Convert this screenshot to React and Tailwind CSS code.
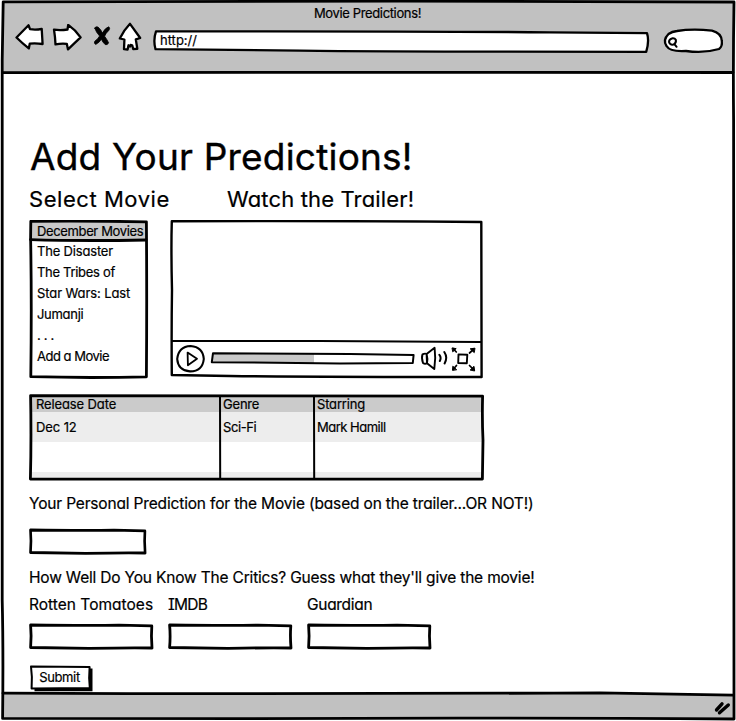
function Outline({ box, children }) {
  return (
    <svg
      viewBox={box}
      preserveAspectRatio="none"
      className="pointer-events-none absolute inset-0 size-full fill-none stroke-black stroke-[2.8]"
      strokeLinejoin="round"
      strokeLinecap="round"
    >
      {children}
    </svg>
  );
}

function ToolIcon({ box, className, children }) {
  return (
    <svg viewBox={box} className={`shrink-0 fill-white stroke-black stroke-[2.3] ${className}`} strokeLinejoin="round" strokeLinecap="round">
      {children}
    </svg>
  );
}

function Toolbar() {
  return (
    <header className="flex h-[73px] shrink-0 flex-col bg-[#c1c1c1] pt-[2px]">
      <div className="pr-px text-center text-[13px] leading-[22px] tracking-[-0.36px]">Movie Predictions!</div>
      <div className="flex items-start pl-[14px]">
        <ToolIcon box="14 24 32 28" className="h-7 w-8">
          <path d="M16.5 37.5 L28.5 25.2 L30 29.2 Q36 30.2 41.7 28.8 L42.6 44 Q36 43 29.8 43.6 L28.8 48.4 Q22 43 16.5 37.5Z" />
        </ToolIcon>
        <ToolIcon box="51 24 32 28" className="ml-[5px] h-7 w-8">
          <path d="M54 29.6 Q60 30.6 67.5 29.5 L68.2 24.9 Q75.5 30 80.6 37.3 Q74.5 43 68 49.4 L66.8 43.8 Q61 43.2 55.5 44.4 Q55.2 37 54 29.6Z" />
        </ToolIcon>
        <ToolIcon box="92 24 20 24" className="ml-[9px] h-6 w-5">
          <path d="M94.8 28.2 Q95.2 26 98 27 Q101.2 29.8 102.4 33 Q105 28 108.8 26.8 Q110.4 28 109 30.2 Q105.6 33.4 104.6 36.2 Q107 39.5 108.6 42.8 Q107.6 45.4 105.2 44.6 Q102.4 42 101.4 39.2 Q99.4 42.6 95.8 44.4 Q93.6 43.6 94.8 41.2 Q98.2 38.8 99.6 36 Q96.2 32.6 94.8 28.2Z" className="fill-black stroke-[0.8]" />
        </ToolIcon>
        <ToolIcon box="116 22 28 30" className="-mt-[2px] ml-1 h-[30px] w-7">
          <path d="M130 23.8 L140.2 38 L135.8 39.4 L137.3 48.8 L133.2 49 L132.2 45.3 L130.6 45 L130 46.5 L128.5 45.3 L127.6 49.5 L124 49.2 L124.4 39.5 L119.8 38.5 Q124 30 130 23.8Z" />
        </ToolIcon>
        <div className="relative mt-1 ml-2 h-7 w-[500px] pl-[8px] text-[13px] leading-[25px]">
          <Outline box="152 28 500 28">
            <path d="M156 31.4 Q400 31 550 32.3 L647 33.2 Q649.5 41 646.2 51.8 Q400 51.8 300 50.6 L155.5 49.2 Q153 40 156 31.4Z" className="fill-white stroke-[2.3]" />
          </Outline>
          <span className="relative">http://</span>
        </div>
        <ToolIcon box="660 26 68 30" className="mt-[2px] ml-2 h-[30px] w-[68px]">
          <path d="M677 31 Q692 28.6 712 30.6 Q721.5 33 721.8 41 Q722.5 46.5 719 49 Q704 53.5 686 51 Q670 52 666.5 46 Q662.5 40 668.5 34 Q672 31.5 677 31Z" />
          <path d="M672.6 38.2 Q669 39 669 42 Q670 45.2 673.5 44.6 Q676.6 43 675.8 39.8 Q674.8 38 672.6 38.2 M675 44.8 L676.6 46.8" className="fill-none stroke-2" />
        </ToolIcon>
      </div>
    </header>
  );
}

const movies = [
  { name: "The Disaster", cls: "tracking-[-0.18px]" },
  { name: "The Tribes of", cls: "tracking-[-0.3px]" },
  { name: "Star Wars: Last", cls: "tracking-[-0.1px]" },
  { name: "Jumanji", cls: "tracking-[-0.3px]" },
  { name: ". . .", cls: "tracking-[-0.3px]" },
  { name: "Add a Movie", cls: "tracking-[-0.5px]" },
];

function MovieList() {
  return (
    <div className="relative h-40 w-[120px] shrink-0 pt-[2px] text-[13px]">
      <div className="mx-[2px] h-[19px] bg-[#c9c9c9] pl-[6px] leading-[18px] tracking-[-0.36px] whitespace-nowrap">December Movies</div>
      <ul className="pl-2">
        {movies.map((m) => (
          <li key={m.name} className={`h-[21px] leading-[21px] whitespace-nowrap ${m.cls}`}>{m.name}</li>
        ))}
      </ul>
      <Outline box="29 220 120 160">
        <path d="M30.8 221.3 Q90 220.8 146.4 221.8 Q147 300 146.4 376.8 Q90 378.2 30.8 376.7 Q31.8 300 30.6 238 Z" />
        <path d="M30.5 239.6 Q80 241.2 146 240" />
      </Outline>
    </div>
  );
}

function Player() {
  return (
    <div className="relative ml-[21px] flex h-40 w-[314px] flex-col justify-end pb-[3px]">
      <div className="flex h-[38px] items-center pl-[6px]">
        <ToolIcon box="176 342 30 30" className="size-[30px]">
          <path d="M190.6 345 Q203 346 203.8 358 Q202.5 370.5 190 370.4 Q178 369.5 177.2 358 Q178.5 345.5 190.6 345Z" className="stroke-[2.1]" />
          <path d="M187.6 351.6 L197 357.8 L187.9 364.2Z" className="stroke-[1.8]" />
        </ToolIcon>
        <div className="relative ml-1 h-[18px] w-[206px] px-[3px] py-1">
          <div className="h-[10px] w-[101px] bg-[#c9c9c9]" />
          <Outline box="210 349 206 18">
            <path d="M213 353.2 L350 354 L413.6 355 L412.8 363 L340 363.4 L211.8 362.2Z" className="stroke-2" />
          </Outline>
        </div>
        <ToolIcon box="419 345 30 28" className="ml-[3px] h-7 w-[30px]">
          <path d="M426.6 355 L434.6 348.8 Q436 359 434.3 370 L427 364.2Z M422.5 355.4 Q425 354 426.6 355 Q428 360 427 364.2 Q425 365.5 423 364 Q421.2 359 422.5 355.4Z" className="stroke-[1.9]" />
          <path d="M439.4 355.8 Q441.6 358.5 439.8 362 M444.3 353 Q448 358.5 444.6 364.4" className="fill-none stroke-2" />
        </ToolIcon>
        <ToolIcon box="450 345 28 28" className="mt-px ml-px size-7">
          <path d="M458.5 354.4 L467.3 354.8 L466.8 363.3 L458.2 363Z" className="stroke-[1.9]" />
          <path d="M456.3 352 L453 348.5 M469.5 353 L474 349 M456.5 365.5 L453 369.5 M469.5 365.5 L474 370" className="stroke-[1.7]" />
          <path d="M452.4 348 L456.2 348.6 L453 351.6Z M474.6 348.2 L470.2 348.8 L474 352.4Z M452.6 370 L452.8 366.2 L456.4 369.5Z M474.6 370.6 L474 366.3 L470.4 369.8Z" className="fill-black stroke-1" />
        </ToolIcon>
      </div>
      <Outline box="170 220 314 160">
        <path d="M171.8 221.3 Q320 220.6 481.3 222 L481.6 377 Q320 377 230 376 L171.8 375 Q171.4 330 172 290 Q171 250 171.8 221.3Z" className="stroke-[2.4]" />
        <path d="M172 341 L320 341 L481 342" className="stroke-[2.2]" />
      </Outline>
    </div>
  );
}

function MovieTable() {
  const grid = "grid grid-cols-[190px_94px_1fr]";
  return (
    <div className="relative mt-[14px] h-[87px] w-[456px] px-[2px] pt-[2px] text-[13px] whitespace-nowrap">
      <div className={`${grid} h-4 bg-[#cbcbcb] leading-[17px]`}>
        <span className="pl-[5px] tracking-[-0.12px]">Release Date</span>
        <span className="pl-[2px] tracking-[-0.2px]">Genre</span>
        <span className="pl-[2px] tracking-[-0.18px]">Starring</span>
      </div>
      <div className={`${grid} h-[30px] bg-[#ededed] leading-[30px]`}>
        <span className="pl-[5px] tracking-[-0.1px]">Dec 12</span>
        <span className="pl-[2px] tracking-[-0.4px]">Sci-Fi</span>
        <span className="pl-[2px] tracking-[-0.5px]">Mark Hamill</span>
      </div>
      <div className="h-[30px]" />
      <div className="h-[7px] bg-[#ededed]" />
      <Outline box="29 394 456 87">
        <path d="M30.6 395.6 Q200 396 482.6 396.2 Q482 420 483 440 L482.4 479 Q250 478.4 150 479.2 L30.4 479 Q31.4 440 30.6 395.6Z" />
        <path d="M220 397 L220.2 478 M314 397 L314.2 478" className="stroke-2" />
      </Outline>
    </div>
  );
}

function ScoreInput({ label, className = "" }) {
  return (
    <div className={`relative h-[27px] ${className}`} role="textbox" aria-label={label}>
      <Outline box="0 0 125 27">
        <path d="M1.6 2 Q60 2.8 90 2.2 L122.8 2.9 Q122 13 123 25 Q100 24.6 60 25.4 Q30 25 1.6 24.5 Q2.6 13 1.6 2Z" />
      </Outline>
    </div>
  );
}

const critics = [
  { name: "Rotten Tomatoes", cls: "tracking-[0.02px]" },
  { name: "IMDB", cls: "tracking-[-0.75px]" },
  { name: "Guardian", cls: "tracking-[-0.3px]" },
];

export default function App() {
  return (
    <div className="relative flex h-[721px] w-[736px] flex-col overflow-hidden bg-white font-['Inter',sans-serif] text-black [-webkit-text-stroke:0.2px_black] [font-feature-settings:'cv11','cv08']">
      <Toolbar />
      <main className="flex h-[621px] shrink-0 flex-col items-start pl-[29px]">
        <h1 className="mt-[62px] pl-px text-[37px] leading-[44px] tracking-[0.2px] [-webkit-text-stroke:0.4px_black]">Add Your Predictions!</h1>
        <div className="mt-[6px] flex text-[22px] leading-7">
          <h2 className="w-[198px] tracking-[0.55px]">Select Movie</h2>
          <h2 className="tracking-[0.15px]">Watch the Trailer!</h2>
        </div>
        <div className="mt-[7px] flex">
          <MovieList />
          <Player />
        </div>
        <MovieTable />
        <p className="mt-[13px] text-[15.5px] leading-5 tracking-[-0.165px] whitespace-nowrap">
          Your Personal Prediction for the Movie (based on the trailer...OR NOT!)
        </p>
        <ScoreInput label="Personal" className="mt-[14px] w-[118px]" />
        <p className="mt-[13px] text-[15.5px] leading-5 tracking-[-0.185px] whitespace-nowrap">
          How Well Do You Know The Critics? Guess what they'll give the movie!
        </p>
        <div className="mt-[7px] flex gap-[14px]">
          {critics.map((c) => (
            <div key={c.name} className="w-[125px]">
              <div className={`text-[15.5px] leading-5 whitespace-nowrap ${c.cls}`}>{c.name}</div>
              <ScoreInput label={c.name} className="mt-[8px]" />
            </div>
          ))}
        </div>
        <button type="button" className="relative mt-[15px] h-7 w-16 pr-[3px] pb-[3px] text-[13px] leading-[25px] tracking-[-0.36px]">
          <Outline box="29 665 64 28">
            <path d="M34.5 668.5 H92.5 V691.3 H34.5Z" className="fill-black stroke-none" />
            <path d="M31 666.6 L89.6 667 Q88.6 678 89.8 688 L31.6 688.4 Q32.5 677 31 666.6Z" className="fill-white stroke-2" />
          </Outline>
          <span className="relative">Submit</span>
        </button>
      </main>
      <footer className="flex flex-1 items-center justify-end bg-[#c1c1c1] pr-[5px]">
        <ToolIcon box="713 700 18 16" className="h-4 w-[18px]">
          <path d="M716.5 710 L722 703.8 M719.5 712.8 L728.3 705" className="stroke-[3.4]" />
        </ToolIcon>
      </footer>
      <Outline box="0 0 736 721">
        <path d="M0 0 H736 V721 H0Z M3 2 V718.5 H734 V2Z" fillRule="evenodd" className="fill-white stroke-none" />
        <path d="M3.2 1.8 L400 1.2 L734 2 Q733 60 733.6 120 L734 719 Q500 717.5 250 718.6 L2.6 718.4 Q3.4 650 2.2 600 L2.2 60Z" />
        <path d="M3 72.6 Q180 73 400 72.4 L733 72.5 M3 693.2 Q300 694.4 600 692.8 L733 695.2" />
      </Outline>
    </div>
  );
}
